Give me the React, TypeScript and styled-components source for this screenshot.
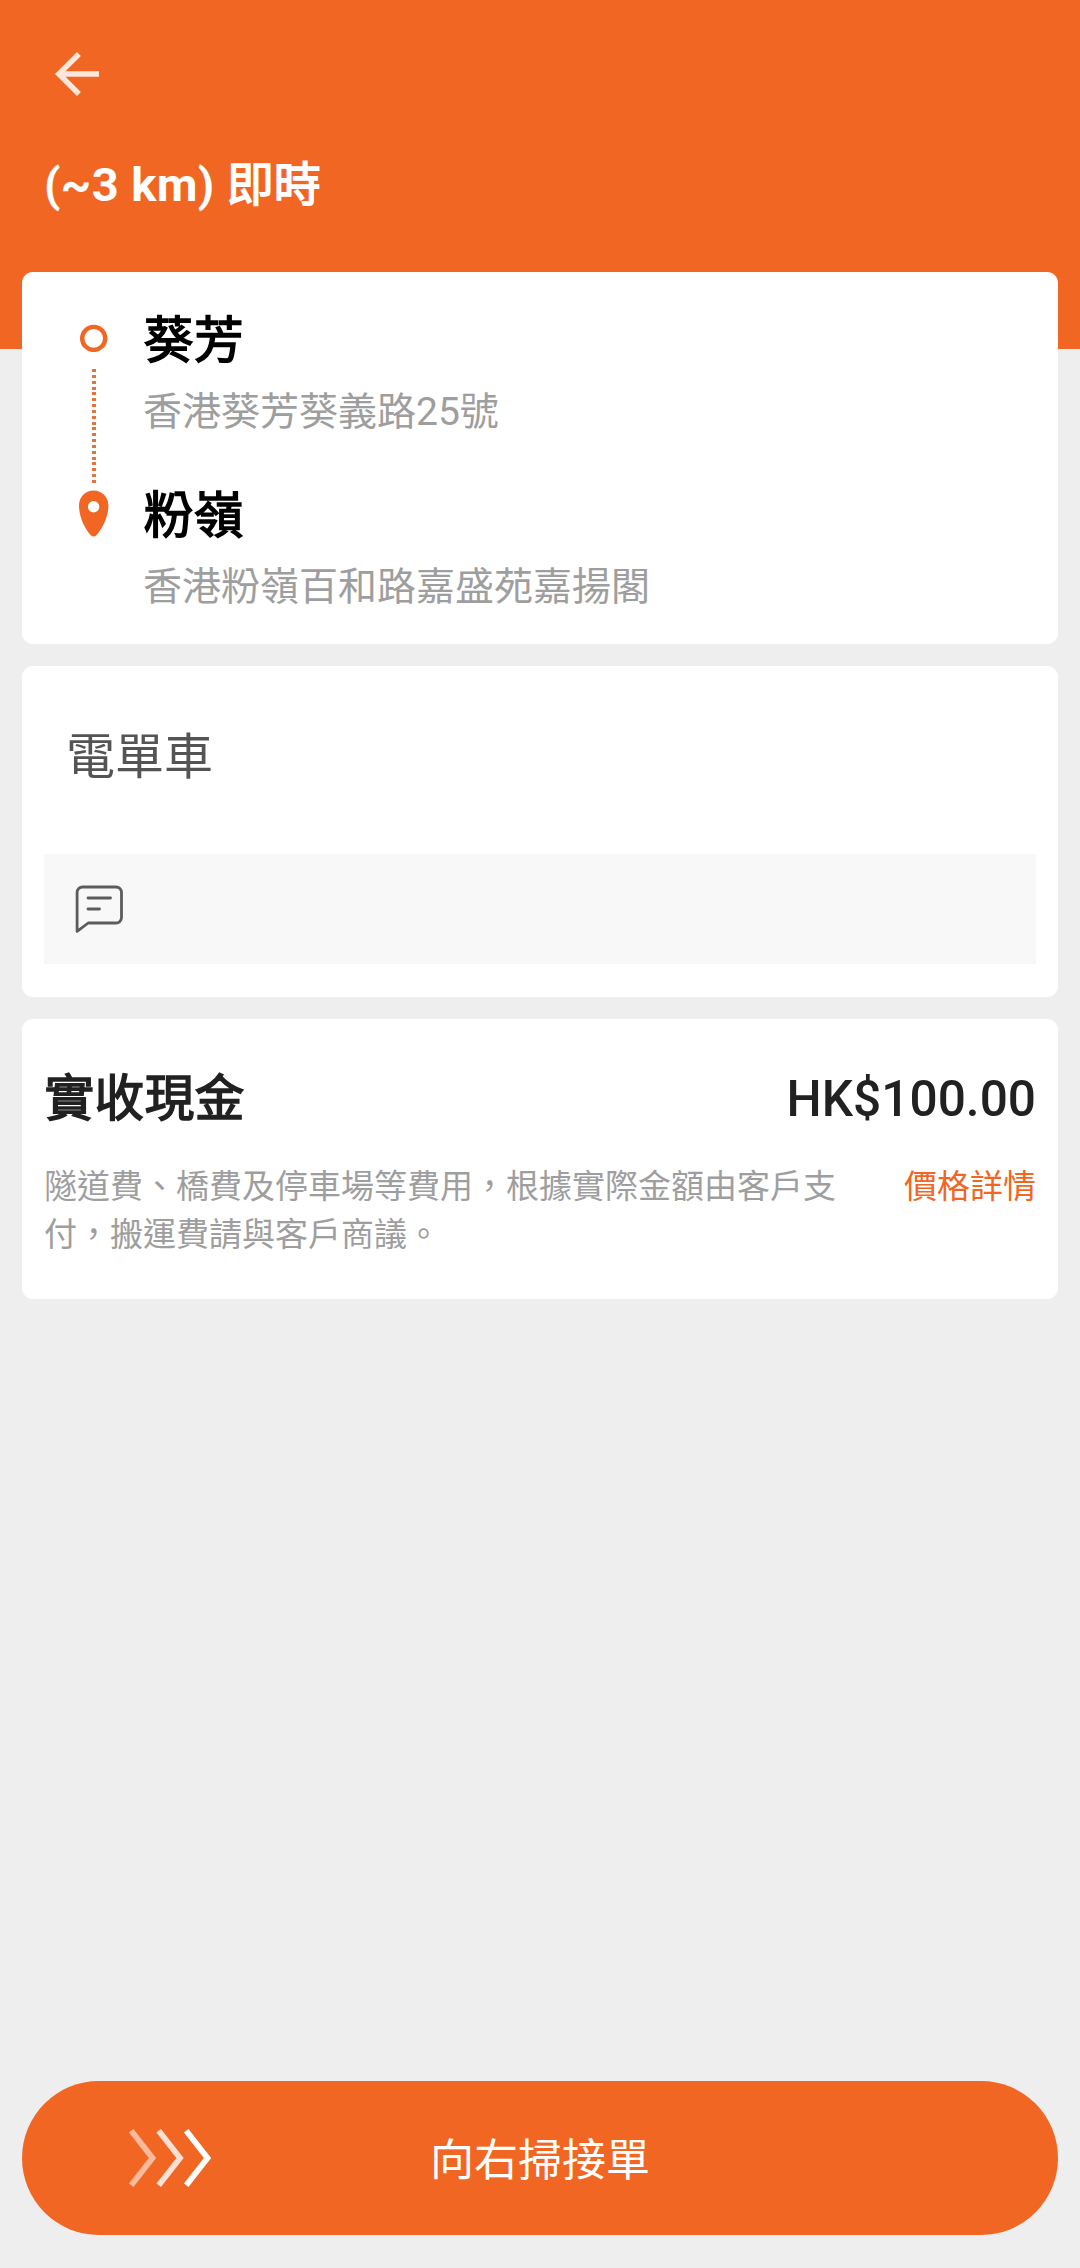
import React from "react";
import styled, { createGlobalStyle } from "styled-components";

const ORANGE = "#f26623";

const GlobalStyle = createGlobalStyle`
  * { box-sizing: border-box; }
  body {
    margin: 0;
    background: #eee;
    font-family: Roboto, "Noto Sans CJK TC", sans-serif;
  }
`;

const Screen = styled.div`
  display: flex;
  flex-direction: column;
  width: 1080px;
  height: 2268px;
  background: #eee;
  overflow: hidden;
`;

const Header = styled.header`
  flex: none;
  display: flex;
  flex-direction: column;
  align-items: flex-start;
  height: 349px;
  padding: 41px 44px 0;
  background: ${ORANGE};
`;

const BackButton = styled.button`
  display: flex;
  padding: 0;
  border: 0;
  background: none;
  color: #fde7dc;
`;

const Title = styled.h1`
  margin: 48px 0 0;
  font-size: 47px;
  font-weight: 700;
  line-height: 60px;
  letter-spacing: 0.4px;
  color: #fff;
`;

/* Emboldened regular-weight Chinese glyphs */
const BoldHan = styled.span<{ $tracking?: number }>`
  font-weight: 400;
  letter-spacing: ${(p) => p.$tracking ?? 0}px;
  margin-left: ${(p) => p.$tracking ?? 0}px;
  -webkit-text-stroke: 1.5px currentColor;
`;

const Cards = styled.main`
  flex: 1;
  display: flex;
  flex-direction: column;
  gap: 22px;
  margin-top: -77px;
  padding: 0 22px;
`;

const Card = styled.section<{ $height: number; $padding: string }>`
  display: flex;
  flex-direction: column;
  height: ${(p) => p.$height}px;
  padding: ${(p) => p.$padding};
  border-radius: 11px;
  background: #fff;
`;

const Route = styled.div`
  display: grid;
  grid-template-columns: 30px 1fr;
  column-gap: 34px;
`;

const Rail = styled.div`
  display: flex;
  flex-direction: column;
  align-items: center;
  padding-top: 18px;
`;

const DottedLine = styled.div`
  width: 4px;
  height: 114px;
  margin: 17px 0 7px;
  background: repeating-linear-gradient(#e4733c 0 3px, transparent 3px 5.84px);
`;

const Stops = styled.div`
  display: flex;
  flex-direction: column;
  gap: 45px;
`;

const Stop = styled.div`
  display: flex;
  flex-direction: column;
  height: 130px;
`;

const Place = styled.div`
  font-size: 49.5px;
  line-height: 70px;
  color: #000;
`;

const Address = styled.div`
  margin-top: 10px;
  font-size: 39px;
  line-height: 52px;
  color: #9e9e9e;
`;

const Vehicle = styled.div`
  padding-left: 22px;
  font-size: 49px;
  line-height: 70px;
  color: #545454;
`;

const NoteBox = styled.div`
  display: flex;
  align-items: center;
  height: 110px;
  margin-top: 61px;
  padding-left: 31px;
  background: #f8f8f8;
`;

const Row = styled.div`
  display: flex;
  justify-content: space-between;
`;

const PriceNotes = styled(Row)`
  margin-top: 29px;
`;

const Amount = styled.span`
  font-size: 49.6px;
  font-weight: 500;
  line-height: 70px;
  color: #212121;
`;

const Notice = styled.p`
  width: 800px;
  margin: 0;
  font-size: 33px;
  line-height: 48.4px;
  color: #9e9e9e;
`;

const DetailsLink = styled.a`
  font-size: 33px;
  line-height: 48.4px;
  color: ${ORANGE};
`;

const SwipeBar = styled.div`
  flex: none;
  display: grid;
  grid-template-columns: 1fr auto 1fr;
  align-items: center;
  height: 154px;
  margin: 0 22px 33px;
  padding: 0 105px;
  border-radius: 77px;
  background: ${ORANGE};
`;

const SwipeLabel = styled.span`
  padding-top: 5px;
  font-size: 44px;
  line-height: 60px;
  color: #fff;
`;

const Icon = styled.svg`
  display: block;
  flex: none;
`;

const BackArrow = () => (
  <Icon width="66" height="66" viewBox="0 0 24 24" fill="currentColor">
    <path d="M20 11H7.83l5.59-5.59L12 4l-8 8 8 8 1.41-1.41L7.83 13H20z" />
  </Icon>
);

const OriginDot = () => (
  <Icon width="30" height="28" viewBox="0 0 30 28">
    <circle cx="14.7" cy="14.4" r="11.5" fill="none" stroke={ORANGE} strokeWidth="4.4" />
  </Icon>
);

const Pin = () => (
  <Icon width="30" height="47" viewBox="0 0 30 47">
    <path
      fill={ORANGE}
      fillRule="evenodd"
      d="M14.6 .4C6.4 .4 0 7 0 15.4 0 26.5 5.5 38.5 11.8 45.2 13.5 46.9 15.7 46.9 17.4 45.2 23.7 38.5 29.4 26.5 29.4 15.4 29.4 7 22.8 .4 14.6 .4ZM14.6 11.1a5.7 5.7 0 1 1 0 11.4 5.7 5.7 0 1 1 0-11.4Z"
    />
  </Icon>
);

const MessageIcon = () => (
  <Icon
    width="48"
    height="48"
    viewBox="0 0 48 48"
    fill="none"
    stroke="#5c5c5c"
    strokeWidth="2.8"
    strokeLinecap="round"
    strokeLinejoin="round"
  >
    <path d="M2.1 46.3V7.5a5.5 5.5 0 0 1 5.5-5.5H41a5.5 5.5 0 0 1 5.500 5.500V32.500a5.500 5.500 0 0 1-5.500 5.500H13.200Z" />
    <path d="M13 13H35.5M13 24H24.5" />
  </Icon>
);

const Chevrons = () => (
  <Icon width="88" height="60" viewBox="0 0 88 60" fill="none" stroke="#fff" strokeWidth="5.8">
    <path opacity=".55" d="M4.2 2.7 25.5 30 4.2 57.3" />
    <path opacity=".8" d="M31.7 2.7 53 30 31.7 57.3" />
    <path d="M59.2 2.7 80.5 30 59.2 57.3" />
  </Icon>
);

const stops = [
  { place: "葵芳", address: "香港葵芳葵義路25號" },
  { place: "粉嶺", address: "香港粉嶺百和路嘉盛苑嘉揚閣" },
];

export default function App() {
  return (
    <Screen lang="zh-Hant">
      <GlobalStyle />
      <Header>
        <BackButton aria-label="返回">
          <BackArrow />
        </BackButton>
        <Title>
          (~3 km) <BoldHan>即時</BoldHan>
        </Title>
      </Header>
      <Cards>
        <Card $height={372} $padding="34px 22px 0 57px">
          <Route>
            <Rail>
              <OriginDot />
              <DottedLine />
              <Pin />
            </Rail>
            <Stops>
              {stops.map((s) => (
                <Stop key={s.place}>
                  <Place>
                    <BoldHan $tracking={0.7}>{s.place}</BoldHan>
                  </Place>
                  <Address>{s.address}</Address>
                </Stop>
              ))}
            </Stops>
          </Route>
        </Card>
        <Card $height={331} $padding="57px 22px 0">
          <Vehicle>電單車</Vehicle>
          <NoteBox>
            <MessageIcon />
          </NoteBox>
        </Card>
        <Card $height={280} $padding="45px 22px 0">
          <Row>
            <Amount>
              <BoldHan $tracking={0.5}>實收現金</BoldHan>
            </Amount>
            <Amount>HK$100.00</Amount>
          </Row>
          <PriceNotes>
            <Notice>隧道費、橋費及停車場等費用，根據實際金額由客戶支付，搬運費請與客戶商議。</Notice>
            <DetailsLink>價格詳情</DetailsLink>
          </PriceNotes>
        </Card>
      </Cards>
      <SwipeBar>
        <Chevrons />
        <SwipeLabel>向右掃接單</SwipeLabel>
      </SwipeBar>
    </Screen>
  );
}
